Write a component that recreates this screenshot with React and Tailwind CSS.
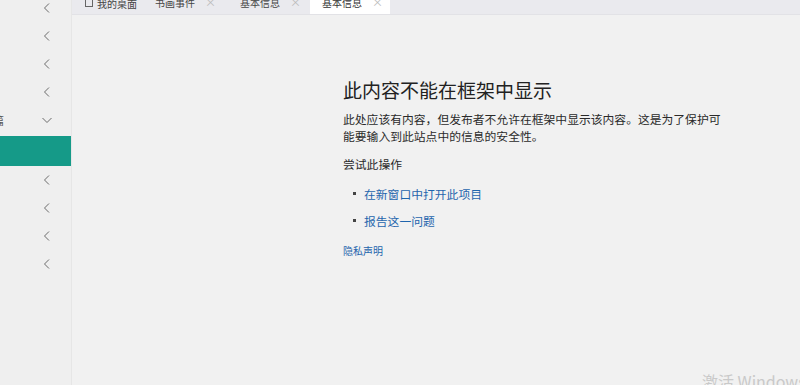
import React from 'react'

const cjk = { fontFamily: '"Microsoft YaHei", "Noto Sans CJK SC", "Noto Sans", sans-serif' }

function Chevron({ down }) {
  return (
    <svg className="w-[12px] h-[12px]" viewBox="0 0 12 12" fill="none" stroke="#6b6b6b" strokeWidth="1">
      {down ? <polyline points="1.5,4 6,8.5 10.5,4" /> : <polyline points="8,1.5 3.5,6 8,10.5" />}
    </svg>
  )
}

function SideRow({ down, label }) {
  return (
    <div className="h-[28px] flex items-center relative">
      {label && <span className="absolute -left-[7px] text-[11px] text-[#555]">{label}</span>}
      <div className="ml-[41px]"><Chevron down={down} /></div>
    </div>
  )
}

function Tab({ children, active, close = true, width, pad }) {
  return (
    <div
      className={`h-full shrink-0 flex items-start gap-[10px] text-[10px] ${active ? 'bg-white text-[#333]' : 'text-[#444]'} ${width} ${pad}`}
    >
      <span className="-mt-[5px] whitespace-nowrap">{children}</span>
      {close && <span className="-mt-[6px] text-[#bbb] text-[11px]">×</span>}
    </div>
  )
}

export default function App() {
  return (
    <div className="w-[800px] h-[385px] overflow-hidden flex bg-[#f1f1f1]" style={cjk}>
      {/* sidebar */}
      <div className="w-[72px] shrink-0 bg-[#efefef] border-r border-[#e6e6e6] overflow-hidden">
        <div className="-mt-[6px]">
          <SideRow />
          <SideRow />
          <SideRow />
          <SideRow />
          <SideRow down label="篇" />
          <div className="pt-[2px]">
            <div className="h-[30px] bg-[#159a88]" />
          </div>
          <SideRow />
          <SideRow />
          <SideRow />
          <SideRow />
        </div>
      </div>

      {/* main */}
      <div className="flex-1 flex flex-col relative">
        <div className="h-[15px] bg-[#eaeaee] border-b border-[#e2e2e6] flex overflow-hidden">
          <Tab close={false} width="w-[73px]" pad="pl-[13px]">
            <span className="inline-flex items-center gap-[4px]">
              <span className="inline-block w-[8px] h-[8px] border border-[#666]" />
              我的桌面
            </span>
          </Tab>
          <Tab width="w-[85px]" pad="pl-[10px]">书画事件</Tab>
          <Tab width="w-[80px]" pad="pl-[10px]">基本信息</Tab>
          <Tab active width="w-[80px]" pad="pl-[12px]">基本信息</Tab>
        </div>

        <div className="flex-1 pl-[271px] pt-[62px]">
          <h1 className="text-[19px] leading-[26px] text-[#222]">此内容不能在框架中显示</h1>
          <p className="mt-[7px] w-[382px] text-[11.8px] leading-[17px] text-[#2a2a2a]">
            此处应该有内容，但发布者不允许在框架中显示该内容。这是为了保护可能要输入到此站点中的信息的安全性。
          </p>
          <p className="mt-[11px] text-[11.8px] leading-[17px] text-[#2a2a2a]">尝试此操作</p>
          <ul className="mt-[13px] flex flex-col gap-[10px]">
            <li className="flex items-center text-[11.8px] leading-[17px] text-[#1f65ad]">
              <span className="w-[3px] h-[3px] bg-[#444] ml-[10px] mr-[8px]" />
              在新窗口中打开此项目
            </li>
            <li className="flex items-center text-[11.8px] leading-[17px] text-[#1f65ad]">
              <span className="w-[3px] h-[3px] bg-[#444] ml-[10px] mr-[8px]" />
              报告这一问题
            </li>
          </ul>
          <p className="mt-[15px] text-[10px] leading-[14px] text-[#1f65ad]">隐私声明</p>
        </div>

        <div className="absolute left-[630px] top-[369px] text-[16px] text-[#c9c9c9] whitespace-nowrap" style={{ fontFamily: '"Noto Sans CJK SC", "Noto Sans", sans-serif' }}>
          激活 Windows
        </div>
      </div>
    </div>
  )
}
